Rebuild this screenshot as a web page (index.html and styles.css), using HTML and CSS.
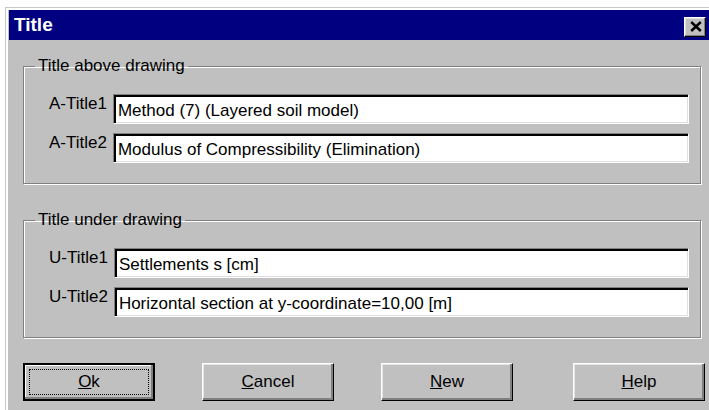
FILE: index.html
```html
<!DOCTYPE html>
<html lang="en">
<head>
<meta charset="utf-8">
<title>Title</title>
<link rel="stylesheet" href="styles.css">
</head>
<body>
<div class="window">
  <div class="frame">
    <div class="titlebar">
      <span class="caption">Title</span>
      <button class="close" type="button" aria-label="Close">
        <svg width="12" height="11" viewBox="0 0 12 11" aria-hidden="true">
          <path d="M1.2 1 L10.8 10 M10.8 1 L1.2 10" stroke="#000" stroke-width="2.4" fill="none"/>
        </svg>
      </button>
    </div>
    <div class="client">
      <fieldset class="group">
        <legend>Title above drawing</legend>
        <div class="fields">
          <label for="a1">A-Title1</label>
          <input id="a1" type="text" value="Method (7) (Layered soil model)">
          <label for="a2">A-Title2</label>
          <input id="a2" type="text" value="Modulus of Compressibility (Elimination)">
        </div>
      </fieldset>
      <fieldset class="group group-under">
        <legend>Title under drawing</legend>
        <div class="fields">
          <label for="u1">U-Title1</label>
          <input id="u1" type="text" value="Settlements s [cm]">
          <label for="u2">U-Title2</label>
          <input id="u2" type="text" value="Horizontal section at y-coordinate=10,00 [m]">
        </div>
      </fieldset>
      <div class="buttons">
        <button class="btn btn-default" type="button"><u>O</u>k</button>
        <button class="btn" type="button"><u>C</u>ancel</button>
        <button class="btn" type="button"><u>N</u>ew</button>
        <button class="btn btn-help" type="button"><u>H</u>elp</button>
      </div>
    </div>
  </div>
</div>
</body>
</html>
```

FILE: styles.css
```css
html, body {
  margin: 0;
  height: 410px;
  overflow: hidden;
  background: #ffffff;
}

body {
  font-family: "Liberation Sans", Arial, sans-serif;
  font-size: 17px;
  color: #000;
}

/* dialog window: light outer edge, white highlight, grey face */
.window {
  box-sizing: border-box;
  width: 704px;
  height: 420px;
  margin: 7px 0 0 5px;
  border-top: 1px solid #c8c8c8;
  border-left: 1px solid #c8c8c8;
  background: #c0c0c0;
}

.frame {
  height: 100%;
  border-top: 2px solid #ffffff;
  border-left: 2px solid #ffffff;
  padding-left: 1px;
}

.titlebar {
  display: flex;
  align-items: center;
  height: 30px;
  padding: 0 3px 0 5px;
  background: #000080;
}

.caption {
  flex: 1;
  color: #ffffff;
  font-weight: bold;
  font-size: 19px;
}

.close {
  display: flex;
  align-items: flex-start;
  justify-content: flex-start;
  box-sizing: border-box;
  width: 22px;
  height: 20px;
  margin-top: 4px;
  padding: 3px 0 0 5px;
  background: #c0c0c0;
  border: 1px solid;
  border-color: #ffffff #000000 #000000 #ffffff;
  box-shadow: inset -1px -1px #808080, inset 1px 1px #dfdfdf;
}

.client {
  padding: 16px 8px 0 14px;
}

/* etched group frame */
.group {
  margin: 0;
  padding: 0;
  min-width: 0;
  border: 1px solid #808080;
  box-shadow: inset 1px 1px #ffffff, 1px 1px #ffffff;
}

.group-under {
  margin-top: 26px;
}

.group legend {
  margin-left: 11px;
  padding: 0 3px;
  line-height: 20px;
  font-size: 17px;
}

.fields {
  display: grid;
  grid-template-columns: auto 1fr;
  column-gap: 6px;
  row-gap: 9px;
  padding: 18px 11px 20px 25px;
}

.fields label {
  align-self: start;
  text-align: right;
  line-height: 20px;
}

.fields input {
  box-sizing: border-box;
  height: 30px;
  margin: 0;
  padding: 6px 4px 2px 4px;
  font: inherit;
  line-height: 20px;
  color: #000;
  background: #ffffff;
  border: 1px solid;
  border-color: #808080 #ffffff #ffffff #808080;
  box-shadow: inset 2px 2px #000000, inset -1px -1px #dfdfdf;
  outline: none;
}

.buttons {
  display: flex;
  gap: 47px;
  margin: 25px -4px 0 0;
}

.btn {
  box-sizing: border-box;
  width: 132px;
  height: 38px;
  margin: 0;
  padding: 0;
  font: inherit;
  color: #000;
  background: #c0c0c0;
  border: 1px solid;
  border-color: #ffffff #000000 #000000 #ffffff;
  box-shadow: inset -2px -2px #808080, inset 1px 1px #e6e6e6;
}

.btn-default {
  border: 2px solid #000000;
  box-shadow: inset -2px -2px #808080, inset 1px 1px #ffffff;
  outline: 1px dotted #000000;
  outline-offset: -7px;
}

.btn-help {
  margin-left: auto;
}
```
